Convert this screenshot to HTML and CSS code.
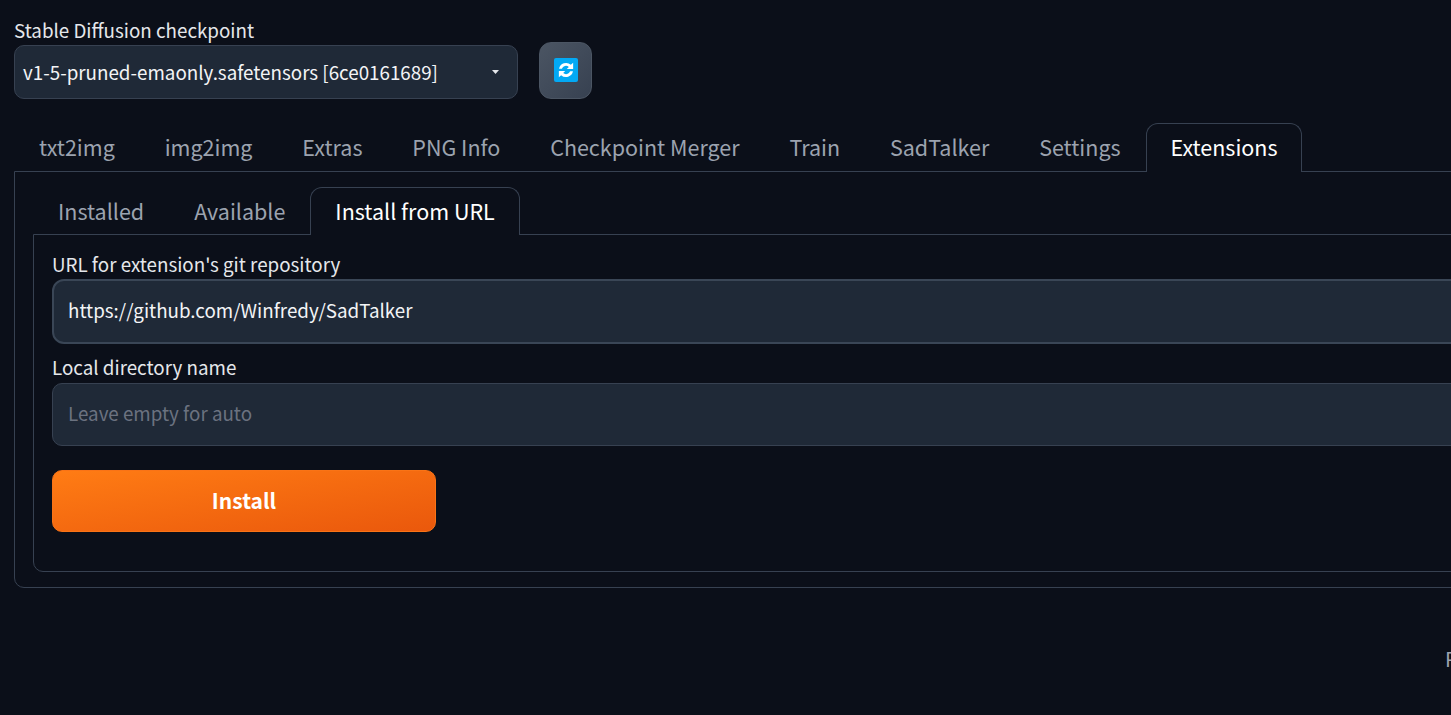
FILE: index.html
```html
<!DOCTYPE html>
<html lang="en">
<head>
<meta charset="utf-8">
<title>Stable Diffusion</title>
<link rel="stylesheet" href="styles.css">
</head>
<body>
<div class="app">
  <div class="top">
    <div class="ckpt">
      <div class="label">Stable Diffusion checkpoint</div>
      <div class="select">
        <span>v1-5-pruned-emaonly.safetensors [6ce0161689]</span>
        <svg class="caret" width="7" height="4" viewBox="0 0 7 4"><path d="M0 0h7L3.5 4z" fill="#e5e7eb"/></svg>
      </div>
    </div>
    <button class="refresh">
      <svg width="24" height="24" viewBox="0 0 24 24">
        <rect width="24" height="24" rx="2" fill="#03a9f4"/>
        <g transform="translate(12 12) scale(.94) translate(-12 -12)">
          <path d="M4.6 10.6A7.6 7.6 0 0 1 17.2 6.5L19.6 4.2V11h-6.8l2.2-2.2A4.6 4.6 0 0 0 7.6 10.6z" fill="#fff"/>
          <path d="M19.4 13.4A7.6 7.6 0 0 1 6.8 17.5L4.4 19.8V13h6.8L9 15.2A4.6 4.6 0 0 0 16.4 13.4z" fill="#fff"/>
        </g>
      </svg>
    </button>
  </div>
  <div class="tabs main-tabs">
    <div class="tab">txt2img</div>
    <div class="tab">img2img</div>
    <div class="tab">Extras</div>
    <div class="tab">PNG Info</div>
    <div class="tab">Checkpoint Merger</div>
    <div class="tab">Train</div>
    <div class="tab">SadTalker</div>
    <div class="tab">Settings</div>
    <div class="tab active">Extensions</div>
  </div>
  <div class="panel outer">
    <div class="tabs sub-tabs">
      <div class="tab">Installed</div>
      <div class="tab">Available</div>
      <div class="tab active">Install from URL</div>
    </div>
    <div class="panel inner">
      <div class="field">
        <div class="label">URL for extension's git repository</div>
        <div class="input focus">https://github.com/Winfredy/SadTalker</div>
      </div>
      <div class="field">
        <div class="label">Local directory name</div>
        <div class="input placeholder">Leave empty for auto</div>
      </div>
      <button class="install">Install</button>
    </div>
  </div>
  <div class="footer">P</div>
</div>
</body>
</html>
```
FILE: styles.css
```css
* { box-sizing: border-box; }
html, body { margin: 0; height: 715px; overflow: hidden; background: #0b0f19; }
body { font-family: "Noto Sans CJK SC", "Source Sans Pro", sans-serif; color: #e5e7eb; }
.app { width: 1900px; padding: 19px 0 0 14px; }
.top { display: flex; align-items: flex-end; gap: 21px; width: 1437px; }
.ckpt { width: 504px; }
.label { font-size: 18.8px; line-height: 22px; color: #e5e7eb; }
.select { margin-top: 4px; height: 54px; display: flex; align-items: center; justify-content: space-between; padding: 0 18px 1px 8px; background: #1f2937; border: 1px solid #374151; border-radius: 10px; font-size: 18.8px; color: #f3f4f6; }
.refresh { width: 53px; height: 57px; padding: 0 0 1px; display: flex; align-items: center; justify-content: center; background: linear-gradient(to bottom right, #4b5563, #374151); border: 1px solid #4b5563; border-radius: 12px; }
.tabs { display: flex; }
.tab { font-size: 21.5px; color: #9ca3af; white-space: nowrap; border: 1px solid transparent; border-bottom: 0; }
.tab.active { color: #fff; background: #0b0f19; border-color: #374151; border-radius: 12px 12px 0 0; position: relative; z-index: 1; }
.main-tabs { margin-top: 24px; height: 49px; margin-bottom: -1px; }
.main-tabs .tab { padding: 7px 23.95px 0; height: 49px; }
.sub-tabs { height: 48px; margin-bottom: -1px; margin-top: 15px; }
.sub-tabs .tab { padding: 7px 24px 0; height: 48px; }
.panel { border: 1px solid #374151; }
.outer { height: 417px; width: 1800px; border-radius: 0 0 0 10px; padding: 0 0 15px 18px; }
.inner { height: 338px; padding: 18px 18px 0; border-radius: 0 0 0 10px; }
.field + .field { margin-top: 12px; }
.input { margin-top: 5px; height: 63px; display: flex; align-items: center; padding: 0 15px 5px; background: #1f2937; border: 1px solid #374151; border-radius: 10px 0 0 10px; font-size: 18.8px; color: #f3f4f6; }
.input.focus { margin-top: 4px; height: 65px; border: 2px solid #3a4656; border-radius: 12px 0 0 12px; padding: 0 14px 5px; }
.input.placeholder { color: #6b7280; }
.install { display: block; margin-top: 24px; padding: 0 0 3px; width: 384px; height: 62px; background: linear-gradient(to bottom right, #ff7c14, #ea580c); border: 1px solid #f97316; border-radius: 10px; color: #fff; font: 600 21px "Noto Sans CJK SC", sans-serif; }
.footer { margin: 58px 0 0 1431px; font-size: 20px; line-height: 26px; color: #9ca3af; }
```
